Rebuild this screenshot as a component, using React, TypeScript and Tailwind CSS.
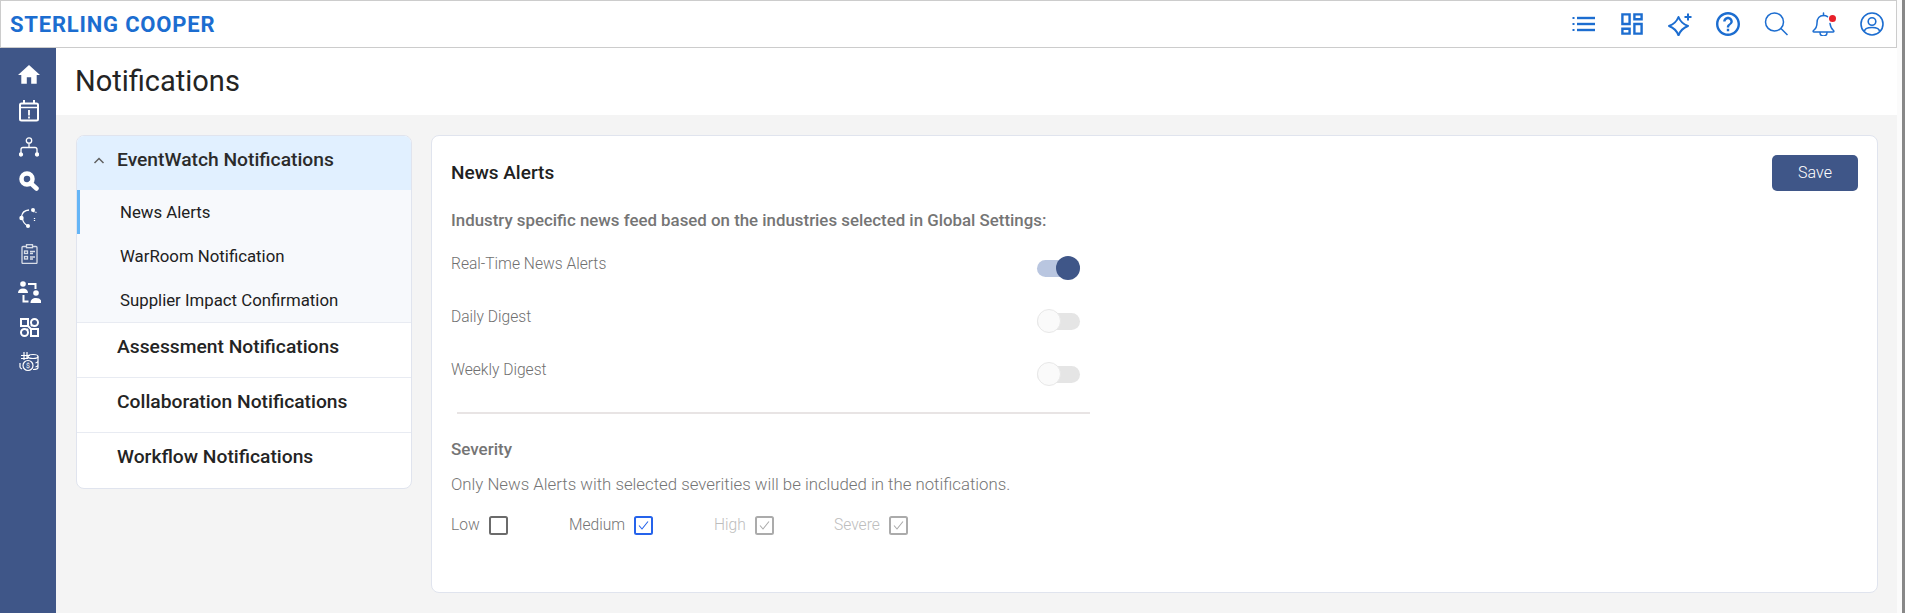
import React from 'react';

const font = "font-['Roboto',sans-serif]";

const HeaderIcons = () => (
  <div className="flex items-center gap-6 text-[#1c6dd0]">
    {/* list */}
    <svg className="w-6 h-6" viewBox="0 0 24 24" fill="currentColor">
      <rect x="0.5" y="5" width="2" height="2" /><rect x="0.5" y="11" width="2" height="2" /><rect x="0.5" y="17" width="2" height="2" />
      <rect x="5" y="4.8" width="18" height="2.4" /><rect x="5" y="10.8" width="18" height="2.4" /><rect x="5" y="16.8" width="18" height="2.4" />
    </svg>
    {/* dashboard */}
    <svg className="w-6 h-6" viewBox="2 2 20 20" fill="currentColor">
      <path d="M19 5v2h-4V5h4M9 5v6H5V5h4m10 8v6h-4v-6h4M9 17v2H5v-2h4M21 3h-8v6h8V3zM11 3H3v10h8V3zm10 8h-8v10h8V11zm-10 4H3v6h8v-6z" />
    </svg>
    {/* sparkle */}
    <svg className="w-6 h-6" viewBox="0 0 24 24" fill="none" stroke="currentColor" strokeWidth="2" strokeLinejoin="round">
      <path d="M10.500 5Q13 11.500 20 14Q13 16.500 10.500 23.500Q8 16.500 1 14Q8 11.500 10.500 5z" />
      <path d="M20 1.500v7M16.500 5h7" strokeWidth="2" />
    </svg>
    {/* help */}
    <svg className="w-6 h-6" viewBox="2 2 20 20" fill="currentColor">
      <path d="M11 18h2v-2h-2v2zm1-16C6.480 2 2 6.480 2 12s4.480 10 10 10 10-4.480 10-10S17.520 2 12 2zm0 18c-4.410 0-8-3.590-8-8s3.590-8 8-8 8 3.590 8 8-3.590 8-8 8zm0-14c-2.210 0-4 1.790-4 4h2c0-1.100.9-2 2-2s2 .9 2 2c0 2-3 1.750-3 5h2c0-2.250 3-2.500 3-5 0-2.210-1.790-4-4-4z" />
    </svg>
    {/* search */}
    <svg className="w-6 h-6" viewBox="0 0 24 24" fill="none" stroke="currentColor" strokeWidth="1.500">
      <circle cx="10.500" cy="10" r="9" />
      <path d="M17 16.500l6.500 6.500" />
    </svg>
    {/* bell with red dot */}
    <div className="relative w-6 h-6">
      <svg className="w-6 h-6" viewBox="0 0 24 24" fill="none" stroke="currentColor" strokeWidth="1.500" strokeLinecap="round" strokeLinejoin="round">
        <path d="M11.500 1v2.500" />
        <path d="M15.500 4.700C14.500 3.900 13 3.500 11.500 3.500 7.500 3.500 5 6.500 5 11c0 4-1.500 6-3.500 7.500-.8.6-.4 1.500.5 1.500h19c.9 0 1.300-.9.5-1.500C19.500 17 18.500 15 18 11.500" />
        <path d="M8 20.500c0 4.500 7 4.500 7 0" />
      </svg>
      <span className="absolute top-[3px] right-0 w-[7px] h-[7px] rounded-full bg-[#e8202a]" />
    </div>
    {/* user */}
    <svg className="w-6 h-6" viewBox="0 0 24 24" fill="none" stroke="currentColor" strokeWidth="1.600">
      <circle cx="12" cy="12" r="11" />
      <circle cx="12" cy="9.500" r="3.800" />
      <path d="M4.500 19.500c0-3 3-4 7.500-4s7.500 1 7.500 4" />
    </svg>
  </div>
);

const SideIcons = () => (
  <div className="flex flex-col items-center pt-4 pl-[2px] text-white">
    <svg className="w-[22px] h-[22px]" viewBox="2 3 20 18" fill="currentColor">
      <path d="M10 20v-6h4v6h5v-8h3L12 3 2 12h3v8z" />
    </svg>
    <svg className="w-5 h-[22px] mt-[14px]" viewBox="0 0 20 22" fill="none" stroke="currentColor" strokeWidth="2">
      <rect x="1" y="3.500" width="18" height="17" rx="1.500" />
      <path d="M1 7.500h18" strokeWidth="1.500" />
      <path d="M5 0v4M15 0v4" />
      <path d="M10 10v5.500M10 16.500v2" strokeWidth="1.800" />
    </svg>
    <svg className="w-5 h-5 mt-[15px]" viewBox="0 0 20 20" fill="none" stroke="currentColor" strokeWidth="1.300">
      <circle cx="10" cy="3.500" r="2.700" />
      <path d="M10 6.200v4M2 17v-4.500q0-2 2-2h12q2 0 2 2V17" />
      <circle cx="2" cy="17.500" r="1.500" fill="currentColor" />
      <circle cx="18" cy="17.500" r="1.500" fill="currentColor" />
    </svg>
    <svg className="w-5 h-5 mt-[14px]" viewBox="0 0 20 20" fill="none" stroke="currentColor" strokeWidth="4.500">
      <circle cx="8" cy="8" r="5.500" />
      <path d="M11.500 12l6 5.500" strokeLinecap="round" />
    </svg>
    <svg className="w-5 h-[22px] mt-[16px]" viewBox="0 0 20 22" fill="none" stroke="currentColor" strokeWidth="1.300">
      <path d="M2.500 9.500C3 6 5 3.500 10 3" />
      <path d="M3.500 12c.5 3 2.500 5.500 5.500 7" />
      <path d="M14 4.500l3.500 1" strokeDasharray="1.500 1" />
      <circle cx="14" cy="3" r="2" fill="currentColor" stroke="none" />
      <circle cx="2.500" cy="11" r="2.200" fill="currentColor" stroke="none" />
      <circle cx="9" cy="19" r="2" fill="currentColor" stroke="none" />
      <path d="M15.500 11v3" strokeDasharray="1 1" />
    </svg>
    <svg className="w-[17px] h-5 mt-[15px] opacity-80" viewBox="0 0 17 20" fill="none" stroke="currentColor" strokeWidth="1.300">
      <rect x="1" y="2.500" width="15" height="17" rx="1" />
      <rect x="5.500" y="0.700" width="6" height="3" fill="#3f5688" />
      <rect x="3.500" y="7" width="3" height="2.500" />
      <rect x="3.500" y="12.500" width="3" height="2.500" />
      <path d="M9 7.500h5M9 9.500h3M9 13h5M9 15h3" />
    </svg>
    <svg className="w-[23px] h-[22px] mt-[17px]" viewBox="0 0 23 22" fill="currentColor">
      <circle cx="5" cy="3" r="2.800" />
      <path d="M0 12c0-3 2-4.500 5-4.500s5 1.500 5 4.500z" />
      <circle cx="18" cy="12" r="2.800" />
      <path d="M12.500 22c0-3.500 2.200-5 5.500-5s5.500 1.500 5.500 5z" />
      <path d="M10 2h8.500v6h-2V4H10zM4.500 14h2v5.500h4v2h-6z" />
    </svg>
    <svg className="w-[19px] h-[19px] mt-[15px]" viewBox="0 0 19 19" fill="none" stroke="currentColor" strokeWidth="2">
      <path d="M1 1h7v7H1z" />
      <circle cx="14.500" cy="4.500" r="3.500" />
      <circle cx="4.500" cy="14.500" r="3.500" />
      <path d="M11 11h7v7h-7zM8 8l3 3M11 8l1-1M8 11l-1 1" />
    </svg>
    <svg className="w-5 h-[21px] mt-[14px]" viewBox="0 0 20 21" fill="none" stroke="currentColor" strokeWidth="1.200">
      <path d="M5 1v8M8 1v6M2 4.500h9M2 7.500h7" />
      <ellipse cx="14" cy="5.500" rx="5" ry="2" />
      <path d="M19 5.500v11c0 1-1.500 2-5 2M19 10c0 1-1 1.500-2.500 2M19 14c0 1-1 1.500-2.500 2M9 5.500v2" />
      <circle cx="9" cy="14.500" r="5" fill="#3f5688" />
      <text x="9" y="17" fontSize="7" fill="currentColor" stroke="none" textAnchor="middle" fontFamily="Roboto">$</text>
      <path d="M1 12v4c0 1 1 1.500 2 2" />
    </svg>
  </div>
);

const Toggle = ({ on }: { on?: boolean }) => (
  <div className={`relative w-[43px] h-[17px] rounded-full ${on ? 'bg-[#b9c6e0]' : 'bg-[#e5e5e5]'}`}>
    <span
      className={`absolute top-[-4px] w-6 h-6 rounded-full ${
        on ? 'right-0 bg-[#3f5688]' : 'left-0 bg-[#fafafa] border border-[#e8e8e8]'
      }`}
    />
  </div>
);

const ToggleRow = ({ label, on }: { label: string; on?: boolean }) => (
  <div className="flex items-center justify-between w-[629px] h-[53px]">
    <span className="text-[15.6px] font-light text-[#6f6f6f] -mt-2">{label}</span>
    <Toggle on={on} />
  </div>
);

const Check = ({ color, checked }: { color: string; checked?: boolean }) => (
  <svg className="w-[19px] h-[19px]" viewBox="0 0 19 19" fill="none" stroke={color}>
    <rect x="1" y="1" width="17" height="17" rx="1.500" strokeWidth="2" />
    {checked && <path d="M5 9.500l3 3.500 6-7.500" strokeWidth="1.100" />}
  </svg>
);

const severities = [
  { label: 'Low', text: 'text-[#757575]', color: '#6b6b6b', w: 'w-[118px]', checked: false },
  { label: 'Medium', text: 'text-[#757575]', color: '#2563eb', w: 'w-[145px]', checked: true },
  { label: 'High', text: 'text-[#bdbdbd]', color: '#ababab', w: 'w-[120px]', checked: true },
  { label: 'Severe', text: 'text-[#bdbdbd]', color: '#ababab', w: 'w-[80px]', checked: true },
];

export default function App() {
  return (
    <div className={`${font} flex w-[1905px] h-[613px] overflow-hidden bg-[#fbfbfb]`}>
      <div className="flex flex-col w-[1897px] shrink-0">
        {/* Top bar */}
        <header className="flex items-center justify-between h-12 bg-white border border-[#cccccc] pl-[9px] pr-3">
          <span className="text-[22px] font-bold tracking-[0.8px] text-[#1c6dd0]">STERLING COOPER</span>
          <HeaderIcons />
        </header>

        <div className="flex flex-1 min-h-0">
          <aside className="w-14 shrink-0 bg-[#3f5688]">
            <SideIcons />
          </aside>

          <main className="flex flex-col flex-1 min-w-0">
            <div className="flex items-center h-[67px] bg-white pl-[19px]">
              <h1 className="text-[29px] text-[#242424]">Notifications</h1>
            </div>

            <div className="flex flex-1 items-start gap-[19px] bg-[#f4f4f4] pt-5 pl-5 pr-5">
              {/* Left menu */}
              <nav className="w-[336px] h-[354px] shrink-0 overflow-hidden bg-white border border-[#e0e4ee] rounded-[8px]">
                <div className="flex items-center h-[54px] bg-[#e1f0ff] pl-4 pb-[5px]">
                  <svg className="w-[12px] h-[12px] text-[#616161]" viewBox="0 0 12 12" fill="none" stroke="currentColor" strokeWidth="1.500">
                    <path d="M1.500 8l4.500-4.500L10.500 8" />
                  </svg>
                  <span className="ml-[12px] text-[19.25px] font-medium text-[#2b2b2b]">EventWatch Notifications</span>
                </div>
                <div className="bg-[#f7f9fc] border-b border-[#e8ebf2]">
                  <div className="flex items-center h-11 pl-10 pt-[2px] text-[16.8px] text-[#212121] border-l-[3px] border-[#64b5f6]">News Alerts</div>
                  <div className="flex items-center h-11 pl-10 pt-[2px] ml-[3px] text-[16.8px] text-[#212121]">WarRoom Notification</div>
                  <div className="flex items-center h-11 pl-10 pt-[2px] ml-[3px] text-[16.8px] text-[#212121]">Supplier Impact Confirmation</div>
                </div>
                {['Assessment Notifications', 'Collaboration Notifications', 'Workflow Notifications'].map((t, i) => (
                  <div
                    key={t}
                    className={`flex items-center h-[55px] pl-10 text-[19.25px] font-medium text-[#242424] ${i < 2 ? 'pb-[5px] border-b border-[#e8ebf2]' : 'pb-[7px]'}`}
                  >
                    {t}
                  </div>
                ))}
              </nav>

              {/* News alerts panel */}
              <section className="relative w-[1447px] h-[458px] shrink-0 bg-white border border-[#e0e4ee] rounded-[8px] pl-[19px] pt-5">
                <button className="absolute top-[19px] right-[19px] w-[86px] h-9 rounded-[5px] bg-[#3f5688] text-base font-light text-white">Save</button>
                <h2 className="flex items-center h-[34px] text-[19px] font-medium text-[#212121]">News Alerts</h2>
                <p className="mt-[18px] text-[16.85px] font-medium text-[#757575] leading-6">Industry specific news feed based on the industries selected in Global Settings:</p>
                <div className="mt-[10px]">
                  <ToggleRow label="Real-Time News Alerts" on />
                  <ToggleRow label="Daily Digest" />
                  <ToggleRow label="Weekly Digest" />
                </div>
                <div className="ml-[6px] mt-[11px] w-[633px] h-[2px] bg-[#e8e4e4]" />
                <p className="mt-[23px] text-[17px] font-medium text-[#757575] leading-6">Severity</p>
                <p className="mt-[11px] text-[16.8px] font-light text-[#757575] leading-6">Only News Alerts with selected severities will be included in the notifications.</p>
                <div className="flex mt-[18px]">
                  {severities.map((s) => (
                    <div key={s.label} className={`flex items-center gap-[9px] ${s.w}`}>
                      <span className={`text-[15.6px] font-light ${s.text}`}>{s.label}</span>
                      <Check color={s.color} checked={s.checked} />
                    </div>
                  ))}
                </div>
              </section>
            </div>
          </main>
        </div>
      </div>
      <div className="w-[5px] shrink-0" />
      <div className="flex-1 bg-[#888888]" />
    </div>
  );
}
